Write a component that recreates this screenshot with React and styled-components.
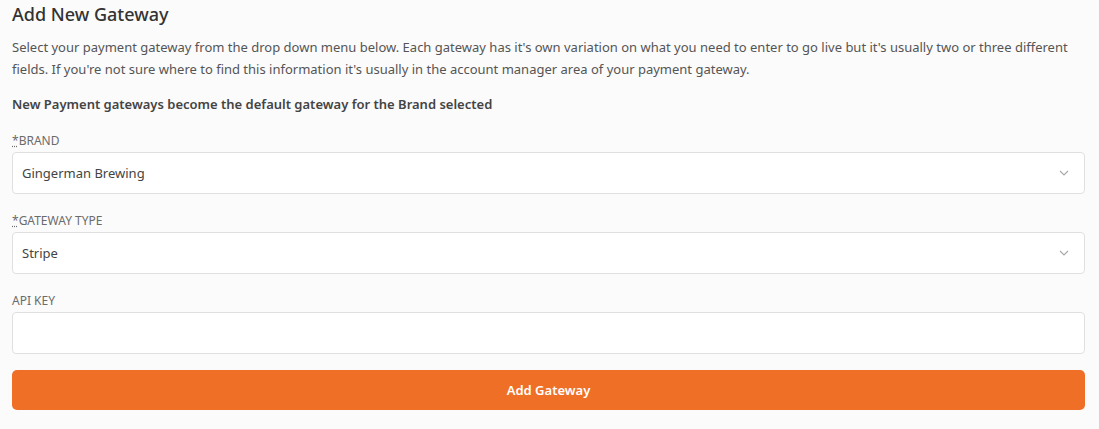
import React from "react";
import styled, { createGlobalStyle } from "styled-components";

const Global = createGlobalStyle`
  html, body { margin: 0; padding: 0; background: #fbfbfb; }
  body { font-family: "Noto Sans", "Open Sans", sans-serif; color: #4a4a4a; }
  * { box-sizing: border-box; }
`;

const Page = styled.div`
  padding: 2px 14px 20px 12px;
  display: flex;
  flex-direction: column;
`;

const Title = styled.h2`
  margin: 0;
  font-size: 18px;
  font-weight: 500;
  color: #333;
  line-height: 24px;
`;

const Intro = styled.p`
  margin: 10px 0 0;
  font-size: 13px;
  line-height: 22px;
  color: #555;
`;

const Note = styled.p`
  margin: 13px 0 0;
  font-size: 13px;
  line-height: 22px;
  font-weight: 600;
  color: #444;
`;

const Field = styled.div`
  display: flex;
  flex-direction: column;
  gap: 3px;
  margin-top: ${(p) => p.$top}px;
`;

const Label = styled.label`
  font-size: 12px;
  line-height: 16px;
  text-transform: uppercase;
  color: #6b6b6b;
  abbr {
    text-decoration: underline dotted;
    cursor: help;
  }
`;

const Box = styled.div`
  height: 42px;
  background: #fff;
  border: 1px solid #e0e0e0;
  border-radius: 4px;
  display: flex;
  align-items: center;
  justify-content: space-between;
  padding: 0 14px 0 9px;
  font-size: 13px;
  color: #444;
`;

const Chevron = styled.svg`
  width: 12px;
  height: 12px;
  color: #aaa;
`;

const Button = styled.button`
  margin-top: 16px;
  height: 40px;
  border: none;
  border-radius: 5px;
  background: #f06f26;
  color: #fff;
  font-family: inherit;
  font-size: 13px;
  font-weight: 600;
`;

const SelectBox = ({ value }) => (
  <Box>
    <span>{value}</span>
    <Chevron viewBox="0 0 12 12" fill="none" stroke="currentColor" strokeWidth="1.2">
      <path d="M2 4l4 4 4-4" />
    </Chevron>
  </Box>
);

export default function App() {
  return (
    <>
      <Global />
      <Page>
        <Title>Add New Gateway</Title>
        <Intro>
          Select your payment gateway from the drop down menu below. Each gateway has it's own variation on what you need to enter to go live but it's usually two or three different fields. If you're not sure where to find this information it's usually in the account manager area of your payment gateway.
        </Intro>
        <Note>New Payment gateways become the default gateway for the Brand selected</Note>
        <Field $top={18}>
          <Label><abbr title="required">*</abbr>Brand</Label>
          <SelectBox value="Gingerman Brewing" />
        </Field>
        <Field $top={19}>
          <Label><abbr title="required">*</abbr>Gateway Type</Label>
          <SelectBox value="Stripe" />
        </Field>
        <Field $top={19}>
          <Label>API Key</Label>
          <Box />
        </Field>
        <Button>Add Gateway</Button>
      </Page>
    </>
  );
}
